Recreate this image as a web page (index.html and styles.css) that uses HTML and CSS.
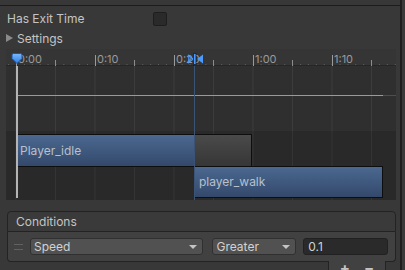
FILE: index.html
```html
<!DOCTYPE html>
<html lang="en">
<head>
  <meta charset="UTF-8">
  <title>Transition Inspector</title>
  <link rel="stylesheet" href="styles.css">
</head>
<body>
  <div class="page">
    <div class="main">
      <div class="topbar"></div>

      <div class="field">
        <span class="label">Has Exit Time</span>
        <span class="checkbox"></span>
      </div>

      <div class="foldout">
        <span class="arrow"></span>
        <span>Settings</span>
      </div>

      <div class="timeline">
        <div class="ruler">
          <div class="ticks-small"></div>
          <div class="ticks-mid"></div>
          <span class="tick-label" style="left: 10px">0:00</span>
          <span class="tick-label" style="left: 89px">0:10</span>
          <span class="tick-label" style="left: 168px">0:20</span>
          <span class="tick-label" style="left: 247px">1:00</span>
          <span class="tick-label" style="left: 326px">1:10</span>
        </div>
        <div class="track-area">
          <div class="band band-curve"></div>
          <div class="band band-states"></div>
        </div>

        <div class="curve"></div>
        <div class="curve-tail"></div>
        <div class="state state-src">Player_idle</div>
        <div class="state-ext"></div>
        <div class="state state-dst">player_walk</div>
        <div class="line-end"></div>
        <div class="playhead"></div>

        <svg class="marker-start" width="12" height="12" viewBox="0 0 12 12">
          <defs>
            <linearGradient id="mk" x1="0" y1="0" x2="0" y2="1">
              <stop offset="0" stop-color="#7ab8ff"/>
              <stop offset="1" stop-color="#2b7ce0"/>
            </linearGradient>
          </defs>
          <path d="M1 2 Q1 0.5 2.5 0.5 H9.5 Q11 0.5 11 2 V5.5 L6 10.5 L1 5.5 Z" fill="url(#mk)" stroke="#1c55a3" stroke-width="1"/>
        </svg>
        <svg class="marker-end" width="16" height="12" viewBox="0 0 16 12">
          <path d="M0.8 2.5 L5 6 L0.8 9.5 Z" fill="none" stroke="#4a9bff" stroke-width="1.2"/>
          <rect x="5.5" y="0.5" width="2.5" height="11" fill="#4a9bff" stroke="#10243f" stroke-width="0.8"/>
          <path d="M15 1.5 V10.5 L9 6 Z" fill="#4a9bff"/>
        </svg>
      </div>

      <div class="conditions">
        <div class="cond-header">Conditions</div>
        <div class="cond-body">
          <span class="handle"></span>
          <div class="dropdown dd-param">Speed<span class="dd-arrow"></span></div>
          <div class="dropdown dd-mode">Greater<span class="dd-arrow"></span></div>
          <div class="value-field">0.1</div>
        </div>
        <div class="cond-footer">
          <span>+</span>
          <span>&minus;</span>
        </div>
      </div>
    </div>
    <div class="edge"></div>
  </div>
</body>
</html>
```

FILE: styles.css
```css
html, body {
  margin: 0;
  height: 270px;
  overflow: hidden;
  background: #383838;
}
body {
  font-family: Inter, "Noto Sans", sans-serif;
  font-size: 12px;
  color: #c4c4c4;
}
.page {
  display: flex;
  height: 270px;
}
.main {
  width: 400px;
}
.edge {
  width: 3px;
  border-left: 2px solid #1f1f1f;
  background: #3b3b3b;
}

.topbar {
  height: 5px;
  border-bottom: 1px solid #1d1d1d;
}

.field {
  display: flex;
  align-items: center;
  height: 19px;
  margin-top: 3px;
  padding-left: 7px;
}
.field .label {
  width: 146px;
}
.checkbox {
  width: 12px;
  height: 12px;
  background: #2a2a2a;
  border: 1px solid #1e1e1e;
  border-radius: 2px;
}

.foldout {
  display: flex;
  align-items: center;
  height: 20px;
  padding-left: 6px;
  gap: 4px;
}
.foldout .arrow {
  width: 0;
  height: 0;
  border-top: 4.5px solid transparent;
  border-bottom: 4.5px solid transparent;
  border-left: 7px solid #8a8a8a;
}

/* timeline */
.timeline {
  position: relative;
  margin-top: 1px;
  margin-left: 6px;
  width: 390px;
  height: 151px;
}
.ruler {
  position: relative;
  height: 17px;
  background: #353535;
  border-bottom: 1px solid #262626;
  box-sizing: border-box;
}
.ticks-small {
  position: absolute;
  left: 0;
  right: 0;
  top: 15px;
  height: 1px;
  background: linear-gradient(to right, #5e5e5e 0 1px, transparent 1px) repeat-x;
  background-size: 7.9px 100%;
  background-position: 10px 0;
}
.ticks-mid {
  position: absolute;
  left: 0;
  right: 0;
  top: 11px;
  height: 6px;
  background: linear-gradient(to right, #8c8c8c 0 1px, transparent 1px) repeat-x;
  background-size: 79px 100%;
  background-position: 49px 0;
}
.tick-label {
  position: absolute;
  top: 6px;
  height: 11px;
  line-height: 9px;
  padding-left: 1px;
  border-left: 1px solid #9a9a9a;
  font-size: 11px;
  color: #9a9a9a;
}

.track-area {
  height: 134px;
}
.band {
  background-repeat: repeat-x;
  background-size: 39.5px 100%;
  background-position: 9.5px 0;
}
.band-curve {
  height: 65px;
  background-color: #2f2f2f;
  background-image: linear-gradient(to right, #3c3c3c 0 1px, transparent 1px);
}
.band-states {
  height: 69px;
  background-color: #292929;
  background-image: linear-gradient(to right, #343434 0 1px, transparent 1px);
}

.curve {
  position: absolute;
  left: 10px;
  top: 46px;
  width: 367px;
  height: 1px;
  background: #9a9a9a;
}
.curve-tail {
  position: absolute;
  left: 377px;
  top: 46px;
  width: 13px;
  height: 1px;
  background: #4e4e4e;
}
.playhead {
  position: absolute;
  left: 10px;
  top: 17px;
  width: 2px;
  height: 132px;
  background: #b4b4b4;
}
.line-end {
  position: absolute;
  left: 188px;
  top: 17px;
  width: 1px;
  height: 134px;
  background: #3a5377;
}

.state {
  position: absolute;
  box-sizing: border-box;
  padding-left: 4px;
  color: #b8c0cc;
  background: linear-gradient(#4b6890, #33496b);
  border: 1px solid #0e0e0e;
}
.state-src {
  left: 10px;
  top: 85px;
  width: 178px;
  height: 33px;
  line-height: 31px;
  border-left: none;
  border-right: none;
}
.state-ext {
  position: absolute;
  left: 188px;
  top: 85px;
  width: 58px;
  height: 33px;
  box-sizing: border-box;
  background: linear-gradient(#4a4a4a, #363636);
  border: 1px solid #0e0e0e;
  border-left: none;
}
.state-dst {
  left: 188px;
  top: 117px;
  width: 189px;
  height: 32px;
  line-height: 30px;
}

.marker-start {
  position: absolute;
  left: 5px;
  top: 4px;
}
.marker-end {
  position: absolute;
  left: 182px;
  top: 4px;
}

/* conditions list */
.conditions {
  margin-top: 11px;
  margin-left: 7px;
  width: 389px;
}
.cond-header {
  height: 19px;
  line-height: 19px;
  padding-left: 8px;
  background: #3a3a3a;
  border: 1px solid #232323;
  border-radius: 4px 4px 0 0;
}
.cond-body {
  display: flex;
  align-items: center;
  height: 17px;
  padding: 6px 7px 6px 6px;
  background: #414141;
  border: 1px solid #232323;
  border-top: none;
  border-radius: 0 0 4px 4px;
}
.handle {
  width: 9px;
  height: 4px;
  margin-right: 7px;
  border-top: 1px solid #616161;
  border-bottom: 1px solid #616161;
}
.dropdown {
  position: relative;
  box-sizing: border-box;
  height: 17px;
  line-height: 15px;
  padding-left: 3px;
  color: #d2d2d2;
  background: #515151;
  border: 1px solid #303030;
  border-radius: 3px;
}
.dd-param {
  width: 174px;
  margin-right: 9px;
}
.dd-mode {
  width: 84px;
  margin-right: 7px;
}
.dd-arrow {
  position: absolute;
  right: 5px;
  top: 6px;
  width: 0;
  height: 0;
  border-left: 4px solid transparent;
  border-right: 4px solid transparent;
  border-top: 4px solid #c4c4c4;
}
.value-field {
  box-sizing: border-box;
  width: 85px;
  height: 17px;
  line-height: 15px;
  padding-left: 4px;
  color: #d2d2d2;
  background: #2a2a2a;
  border: 1px solid #212121;
  border-radius: 3px;
}
.cond-footer {
  display: flex;
  gap: 14px;
  justify-content: center;
  width: 56px;
  height: 16px;
  margin-top: -1px;
  margin-left: 321px;
  background: #414141;
  border: 1px solid #232323;
  border-top: none;
  font-size: 15px;
  font-weight: bold;
  line-height: 14px;
  color: #c4c4c4;
}
```
